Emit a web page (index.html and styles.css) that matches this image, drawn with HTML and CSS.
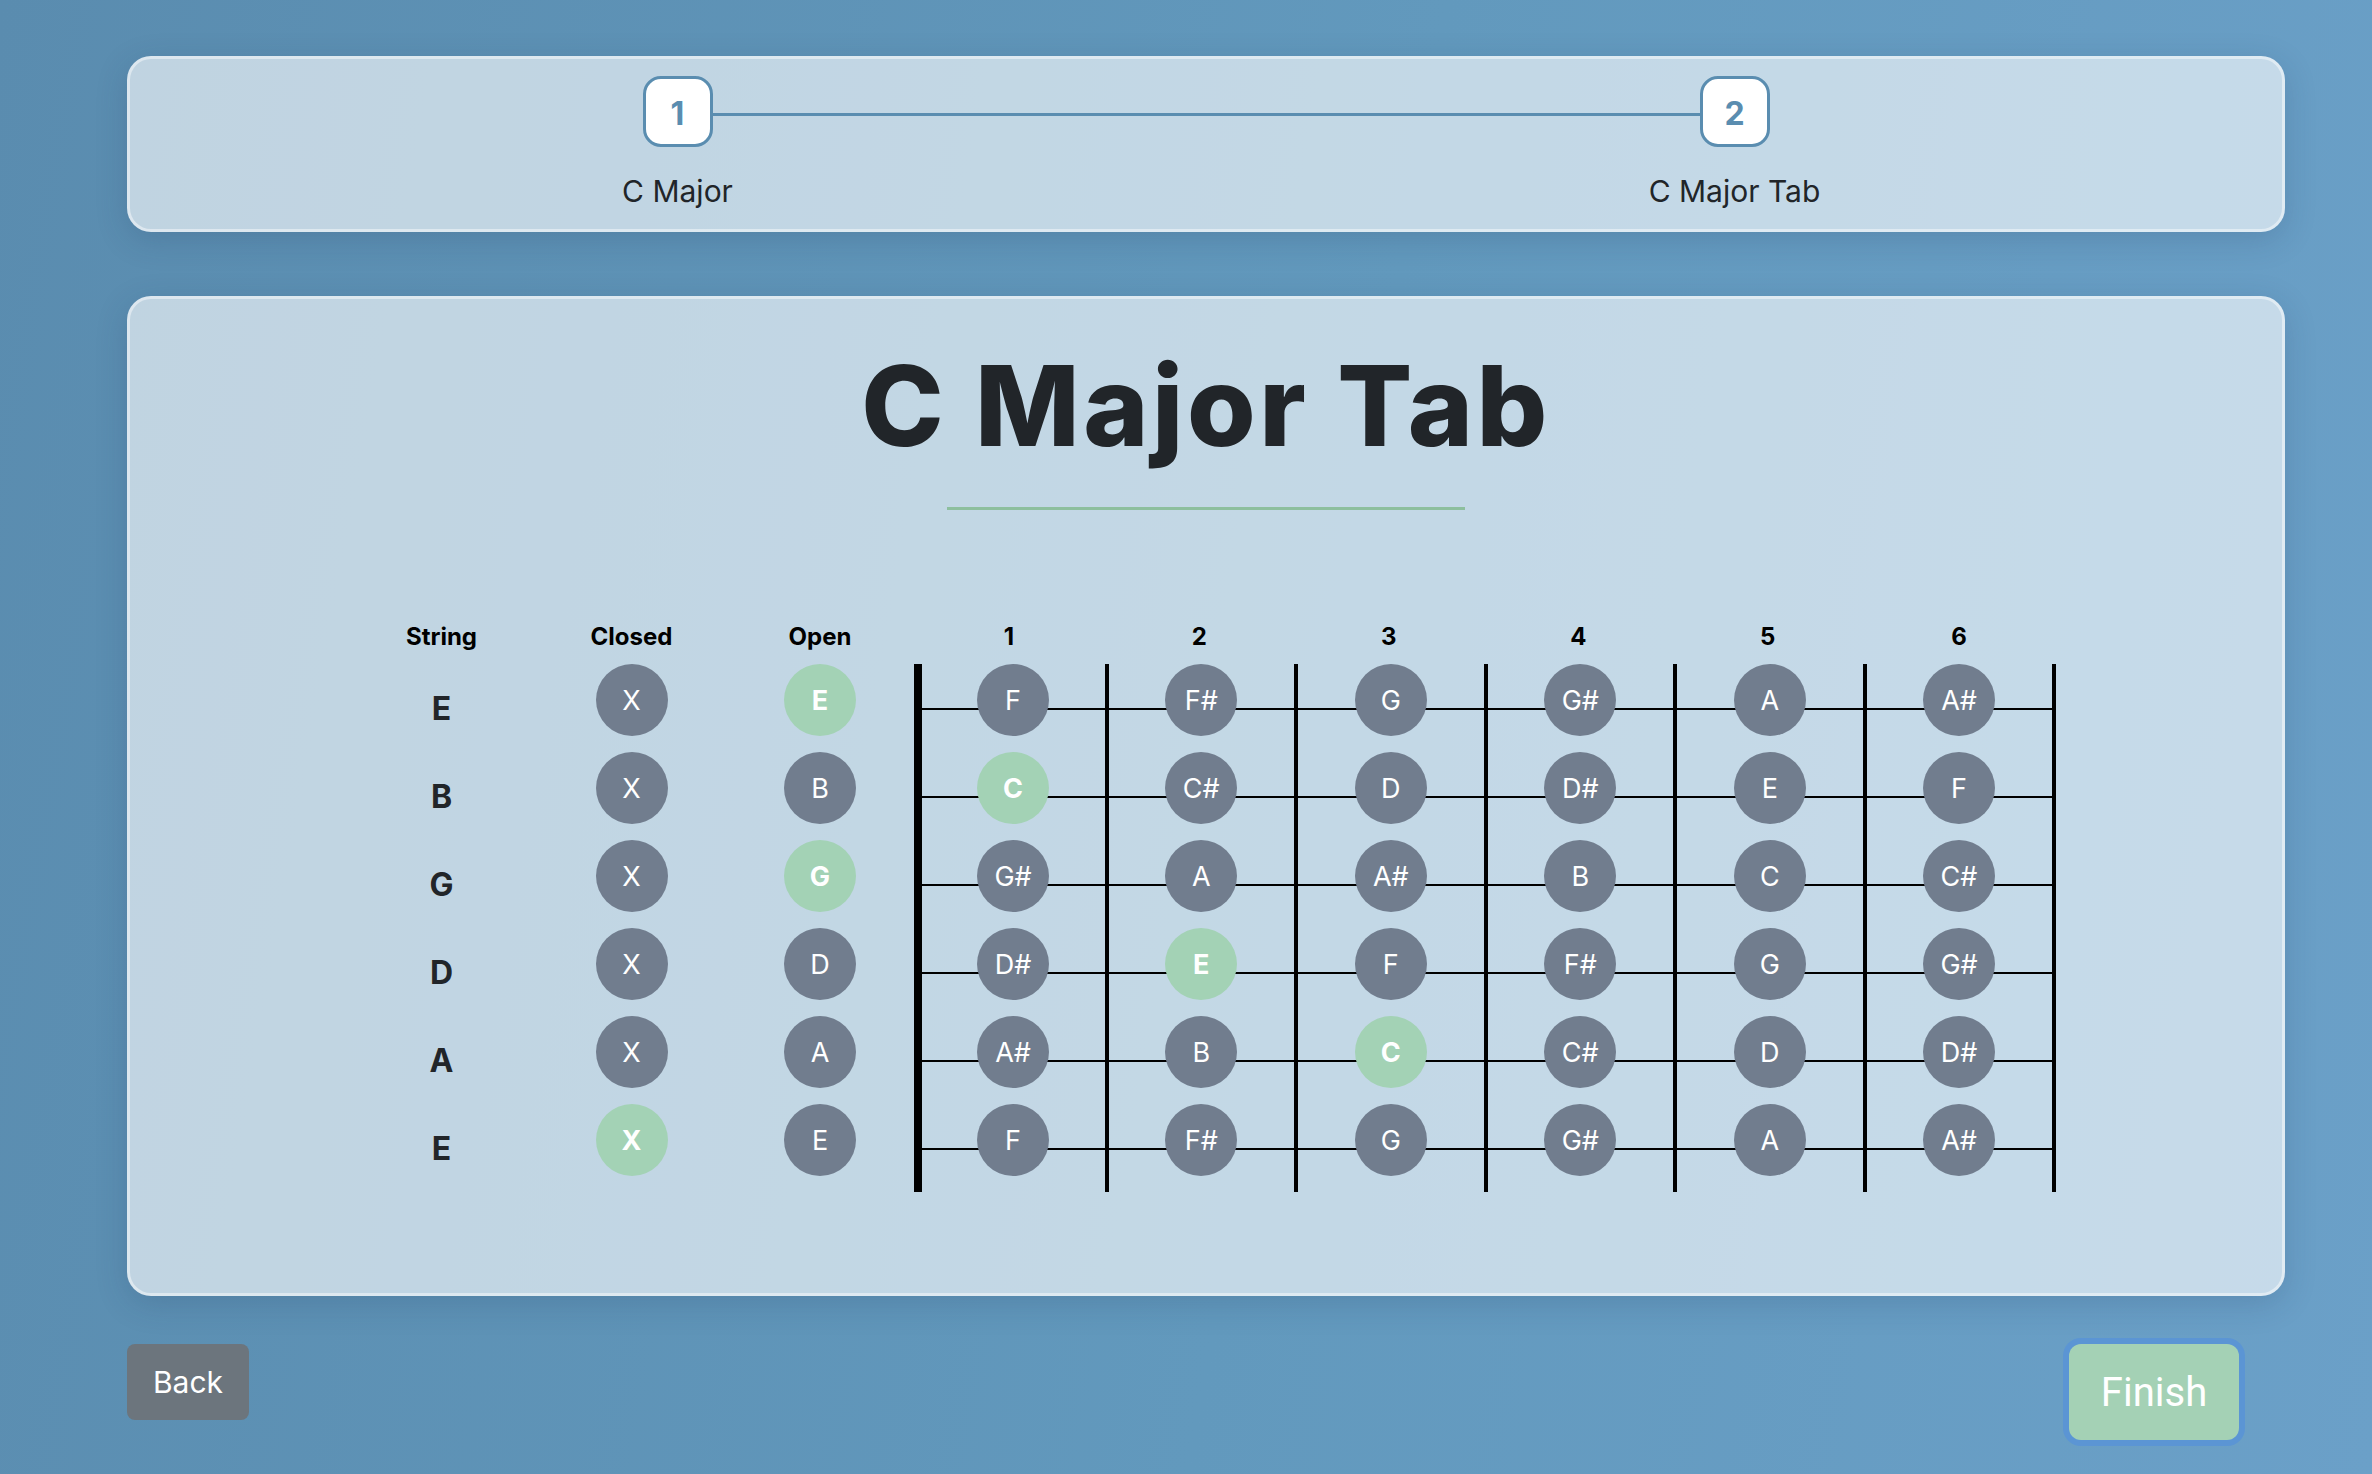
FILE: index.html
```html
<!DOCTYPE html>
<html lang="en">
<head>
<meta charset="utf-8">
<title>C Major Tab</title>
<link rel="stylesheet" href="styles.css">
</head>
<body>
<div class="page">
  <div class="card stepper-card">
    <div class="stepper">
      <div class="step-box s1">1</div>
      <div class="step-line"></div>
      <div class="step-box s2">2</div>
      <div class="step-label s1">C Major</div>
      <div class="step-label s2">C Major Tab</div>
    </div>
  </div>

  <div class="card main-card">
    <h1 class="title">C Major Tab</h1>
    <div class="title-rule"></div>
    <div class="tab-wrap">
      <div class="tab" id="tab">
        <div class="hd">String</div>
        <div class="hd">Closed</div>
        <div class="hd">Open</div>
        <div class="hd">1</div>
        <div class="hd">2</div>
        <div class="hd">3</div>
        <div class="hd">4</div>
        <div class="hd">5</div>
        <div class="hd">6</div>

        <div class="sname">E</div>
        <div class="cell"><span class="note">X</span></div>
        <div class="cell"><span class="note on">E</span></div>
        <div class="cell fret first"><span class="note">F</span></div>
        <div class="cell fret"><span class="note">F#</span></div>
        <div class="cell fret"><span class="note">G</span></div>
        <div class="cell fret"><span class="note">G#</span></div>
        <div class="cell fret"><span class="note">A</span></div>
        <div class="cell fret last"><span class="note">A#</span></div>

        <div class="sname">B</div>
        <div class="cell"><span class="note">X</span></div>
        <div class="cell"><span class="note">B</span></div>
        <div class="cell fret first"><span class="note on">C</span></div>
        <div class="cell fret"><span class="note">C#</span></div>
        <div class="cell fret"><span class="note">D</span></div>
        <div class="cell fret"><span class="note">D#</span></div>
        <div class="cell fret"><span class="note">E</span></div>
        <div class="cell fret last"><span class="note">F</span></div>

        <div class="sname">G</div>
        <div class="cell"><span class="note">X</span></div>
        <div class="cell"><span class="note on">G</span></div>
        <div class="cell fret first"><span class="note">G#</span></div>
        <div class="cell fret"><span class="note">A</span></div>
        <div class="cell fret"><span class="note">A#</span></div>
        <div class="cell fret"><span class="note">B</span></div>
        <div class="cell fret"><span class="note">C</span></div>
        <div class="cell fret last"><span class="note">C#</span></div>

        <div class="sname">D</div>
        <div class="cell"><span class="note">X</span></div>
        <div class="cell"><span class="note">D</span></div>
        <div class="cell fret first"><span class="note">D#</span></div>
        <div class="cell fret"><span class="note on">E</span></div>
        <div class="cell fret"><span class="note">F</span></div>
        <div class="cell fret"><span class="note">F#</span></div>
        <div class="cell fret"><span class="note">G</span></div>
        <div class="cell fret last"><span class="note">G#</span></div>

        <div class="sname">A</div>
        <div class="cell"><span class="note">X</span></div>
        <div class="cell"><span class="note">A</span></div>
        <div class="cell fret first"><span class="note">A#</span></div>
        <div class="cell fret"><span class="note">B</span></div>
        <div class="cell fret"><span class="note on">C</span></div>
        <div class="cell fret"><span class="note">C#</span></div>
        <div class="cell fret"><span class="note">D</span></div>
        <div class="cell fret last"><span class="note">D#</span></div>

        <div class="sname">E</div>
        <div class="cell"><span class="note on">X</span></div>
        <div class="cell"><span class="note">E</span></div>
        <div class="cell fret first"><span class="note">F</span></div>
        <div class="cell fret"><span class="note">F#</span></div>
        <div class="cell fret"><span class="note">G</span></div>
        <div class="cell fret"><span class="note">G#</span></div>
        <div class="cell fret"><span class="note">A</span></div>
        <div class="cell fret last"><span class="note">A#</span></div>
      </div>
    </div>
  </div>

  <div class="actions">
    <button class="btn btn-back">Back</button>
    <button class="btn btn-finish">Finish</button>
  </div>
</div>
</body>
</html>
```

FILE: styles.css
```css
* { box-sizing: border-box; }

html, body {
  margin: 0;
  padding: 0;
}

body {
  min-height: 1474px;
  background: linear-gradient(100deg, #5a8caf 0%, #6299bd 55%, #6ba0c8 100%);
  font-family: Inter, "Liberation Sans", sans-serif;
  color: #212529;
}

.page {
  width: 2158px;
  margin-left: 127px;
  padding-top: 56px;
}

.card {
  background: rgba(255, 255, 255, 0.62);
  border: 3px solid rgba(255, 255, 255, 0.45);
  border-radius: 24px;
  box-shadow: 0 8px 32px rgba(30, 50, 90, 0.18);
}

/* stepper */
.stepper-card {
  padding: 17px 19px 15px;
}

.stepper {
  display: grid;
  grid-template-columns: repeat(4, 1fr);
  grid-template-rows: 71px auto;
  row-gap: 22px;
}

.step-box {
  grid-row: 1;
  justify-self: center;
  width: 70px;
  height: 71px;
  padding-top: 4px;
  background: #fff;
  border: 3px solid #5a8db0;
  border-radius: 18px;
  display: flex;
  align-items: center;
  justify-content: center;
  font-size: 32px;
  font-weight: 700;
  color: #5a8db0;
  position: relative;
  z-index: 1;
}

.step-box.s1 { grid-column: 1 / 3; }
.step-box.s2 { grid-column: 3 / 5; }

.step-line {
  grid-row: 1;
  grid-column: 2 / 4;
  align-self: start;
  margin: 37px 35px 0;
  height: 3px;
  background: #5a8db0;
}

.step-label {
  grid-row: 2;
  justify-self: center;
  font-size: 30px;
  line-height: 45px;
  color: #212529;
}

.step-label.s1 { grid-column: 1 / 3; }
.step-label.s2 { grid-column: 3 / 5; }

/* main card */
.main-card {
  margin-top: 64px;
  padding: 41px 0 101px;
  display: flex;
  flex-direction: column;
  align-items: center;
}

.title {
  margin: 0;
  font-size: 111px;
  line-height: 132px;
  font-weight: 800;
  letter-spacing: 3.5px;
  color: #212529;
}

.title-rule {
  margin-top: 35px;
  width: 518px;
  height: 3px;
  background: #8dbf9e;
}

.tab-wrap {
  margin-top: 106px;
  padding-right: 10px;
}

.tab {
  display: grid;
  grid-template-columns: 190px 190px 187px 191px repeat(4, 189.5px) 193px;
  grid-template-rows: 48px repeat(6, 88px);
}

.hd {
  display: flex;
  align-items: flex-end;
  justify-content: center;
  padding-bottom: 12px;
  font-size: 24px;
  line-height: 30px;
  font-weight: 700;
  color: #000;
}

.sname {
  display: flex;
  align-items: center;
  justify-content: center;
  font-size: 32px;
  font-weight: 700;
  color: #212529;
}

.cell {
  position: relative;
  display: flex;
  justify-content: center;
  align-items: flex-start;
}

.fret {
  border-left: 4px solid #000;
}

.fret.first {
  border-left-width: 8px;
}

.fret.last {
  border-right: 4px solid #000;
}

.fret::before {
  content: "";
  position: absolute;
  left: 0;
  right: 0;
  top: 44px;
  height: 1.5px;
  background: #000;
}

.note {
  position: relative;
  z-index: 1;
  width: 72px;
  height: 72px;
  border-radius: 50%;
  background: #717d8e;
  color: #fff;
  display: flex;
  align-items: center;
  justify-content: center;
  font-size: 27px;
  font-weight: 400;
}

.note.on {
  background: #a3d2b5;
  font-weight: 700;
}

/* actions */
.actions {
  margin-top: 48px;
  display: flex;
  justify-content: space-between;
  align-items: flex-start;
  padding-right: 46px;
}

.btn {
  font-family: Inter, "Liberation Sans", sans-serif;
  color: #fff;
  border: none;
  cursor: pointer;
}

.btn-back {
  width: 122px;
  height: 76px;
  background: #6c757d;
  border-radius: 8px;
  font-size: 30px;
}

.btn-finish {
  width: 170px;
  height: 96px;
  background: #a4d1b5;
  border-radius: 12px;
  font-family: Roboto, Inter, sans-serif;
  font-size: 40px;
  box-shadow: 0 0 0 6px #5b95d4;
}
```
